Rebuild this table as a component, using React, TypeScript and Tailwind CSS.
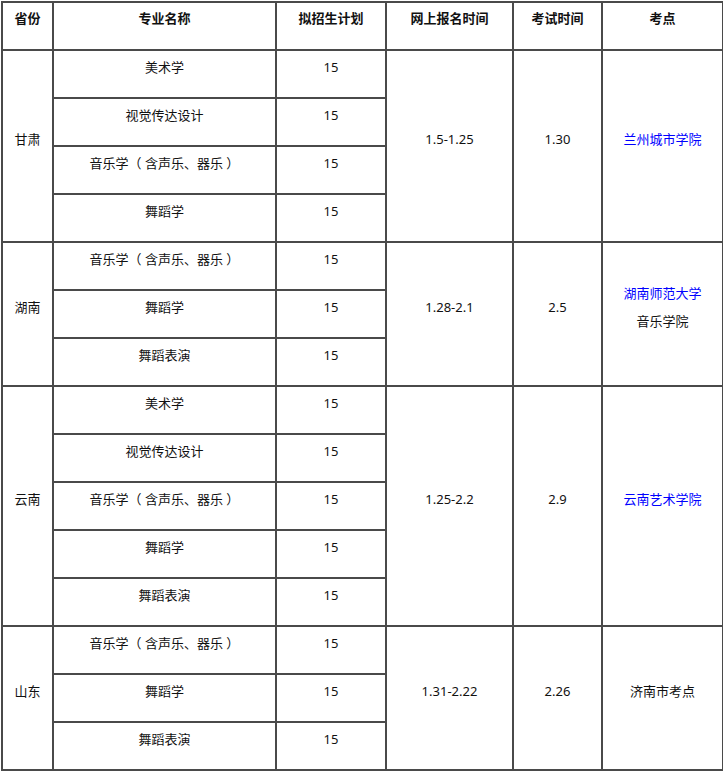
import React from "react";

type Row = { major: string; plan: string };
type Group = {
  province: string;
  rows: Row[];
  reg: string;
  exam: string;
  site: React.ReactNode;
};

const m1 = "美术学";
const m2 = "视觉传达设计";
const m3 = "音乐学（ 含声乐、器乐 ）";
const m4 = "舞蹈学";
const m5 = "舞蹈表演";

const groups: Group[] = [
  {
    province: "甘肃",
    rows: [m1, m2, m3, m4].map((m) => ({ major: m, plan: "15" })),
    reg: "1.5-1.25",
    exam: "1.30",
    site: <span className="text-[#0000ff]">兰州城市学院</span>,
  },
  {
    province: "湖南",
    rows: [m3, m4, m5].map((m) => ({ major: m, plan: "15" })),
    reg: "1.28-2.1",
    exam: "2.5",
    site: (
      <>
        <div className="text-[#0000ff]">湖南师范大学</div>
        <div className="mt-[10px]">音乐学院</div>
      </>
    ),
  },
  {
    province: "云南",
    rows: [m1, m2, m3, m4, m5].map((m) => ({ major: m, plan: "15" })),
    reg: "1.25-2.2",
    exam: "2.9",
    site: <span className="text-[#0000ff]">云南艺术学院</span>,
  },
  {
    province: "山东",
    rows: [m3, m4, m5].map((m) => ({ major: m, plan: "15" })),
    reg: "1.31-2.22",
    exam: "2.26",
    site: <span>济南市考点</span>,
  },
];

const td = "border-2 border-[#4a4a4a] text-center align-middle p-0";

function Cell({ children }: { children: React.ReactNode }) {
  return <div className="pb-[14px] leading-[18px] whitespace-pre">{children}</div>;
}

export default function App() {
  return (
    <div
      className="bg-white w-[723px] h-[774px] pt-[1px] pl-[1px] text-[#111] text-[13px]"
      style={{
        fontFamily:
          '"Noto Sans", "Noto Sans CJK SC", "Microsoft YaHei", sans-serif',
      }}
    >
      <table className="border-collapse table-fixed w-[721px]">
        <colgroup>
          <col className="w-[51px]" />
          <col className="w-[223px]" />
          <col className="w-[110px]" />
          <col className="w-[127px]" />
          <col className="w-[89px]" />
          <col className="w-[121px]" />
        </colgroup>
        <thead>
          <tr className="h-[48px]">
            {["省份", "专业名称", "拟招生计划", "网上报名时间", "考试时间", "考点"].map(
              (h) => (
                <th key={h} className={td + " font-bold"}>
                  <div className="pb-[17px] leading-[18px]">{h}</div>
                </th>
              )
            )}
          </tr>
        </thead>
        <tbody>
          {groups.map((g) =>
            g.rows.map((r, i) => (
              <tr key={g.province + i} className="h-[48px]">
                {i === 0 && (
                  <td className={td} rowSpan={g.rows.length}>
                    <Cell>{g.province}</Cell>
                  </td>
                )}
                <td className={td}>
                  <Cell>{r.major}</Cell>
                </td>
                <td className={td}>
                  <Cell>{r.plan}</Cell>
                </td>
                {i === 0 && (
                  <>
                    <td className={td} rowSpan={g.rows.length}>
                      <Cell>{g.reg}</Cell>
                    </td>
                    <td className={td} rowSpan={g.rows.length}>
                      <Cell>{g.exam}</Cell>
                    </td>
                    <td className={td} rowSpan={g.rows.length}>
                      <Cell>{g.site}</Cell>
                    </td>
                  </>
                )}
              </tr>
            ))
          )}
        </tbody>
      </table>
    </div>
  );
}
